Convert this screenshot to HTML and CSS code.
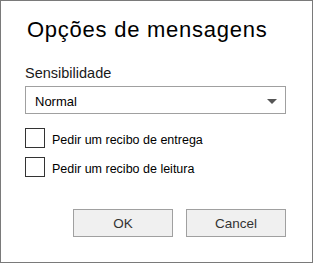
FILE: index.html
```html
<!DOCTYPE html>
<html>
<head>
  <title>Opções de mensagens</title>
  <link rel="stylesheet" href="styles.css">
</head>
<body>
  <div class="dialog">
    <h1 class="dialog-title">Opções de mensagens</h1>

    <label class="field-label">Sensibilidade</label>
    <div class="select-box">
      <span class="select-value">Normal</span>
      <span class="select-arrow"></span>
    </div>

    <div class="check-list">
      <div class="check-row">
        <span class="check-box"></span>
        <span class="check-text">Pedir um recibo de entrega</span>
      </div>
      <div class="check-row">
        <span class="check-box"></span>
        <span class="check-text">Pedir um recibo de leitura</span>
      </div>
    </div>

    <div class="dialog-buttons">
      <button class="btn">OK</button>
      <button class="btn">Cancel</button>
    </div>
  </div>
</body>
</html>
```

FILE: styles.css
```css
body {
  margin: 0;
  font-family: "Liberation Sans", Arial, sans-serif;
  color: #000;
  background: #fff;
}

.dialog {
  box-sizing: border-box;
  width: 313px;
  height: 263px;
  border: 1px solid #7a7a7a;
  padding: 14px 26px 0 24px;
}

.dialog-title {
  margin: 0 0 0 2px;
  font-weight: normal;
  font-size: 22px;
  letter-spacing: 0.75px;
  line-height: 30px;
}

.field-label {
  display: block;
  margin-top: 20px;
  font-size: 14.5px;
  line-height: 17px;
  color: #1a1a1a;
}

.select-box {
  box-sizing: border-box;
  height: 28px;
  margin-top: 4px;
  border: 1px solid #a0a0a0;
  display: flex;
  align-items: center;
  justify-content: space-between;
  padding: 0 8px 0 9px;
  font-size: 13px;
}

.select-value {
  margin-top: 2px;
}

.select-arrow {
  width: 0;
  height: 0;
  border-left: 5px solid transparent;
  border-right: 5px solid transparent;
  border-top: 5px solid #555;
  margin-top: 2px;
}

.check-list {
  margin-top: 14px;
  display: flex;
  flex-direction: column;
  gap: 9px;
}

.check-row {
  display: flex;
  align-items: center;
  gap: 7px;
  font-size: 12.5px;
}

.check-box {
  box-sizing: border-box;
  width: 20px;
  height: 20px;
  border: 1px solid #333;
}

.check-text {
  margin-top: 3px;
}

.dialog-buttons {
  margin-top: 32px;
  display: flex;
  justify-content: flex-end;
  gap: 13px;
}

.btn {
  box-sizing: border-box;
  width: 100px;
  height: 28px;
  background: #f0f0f0;
  border: 1px solid #a0a0a0;
  font-family: "Liberation Sans", Arial, sans-serif;
  font-size: 13.5px;
  color: #333;
  padding: 0;
}
```
